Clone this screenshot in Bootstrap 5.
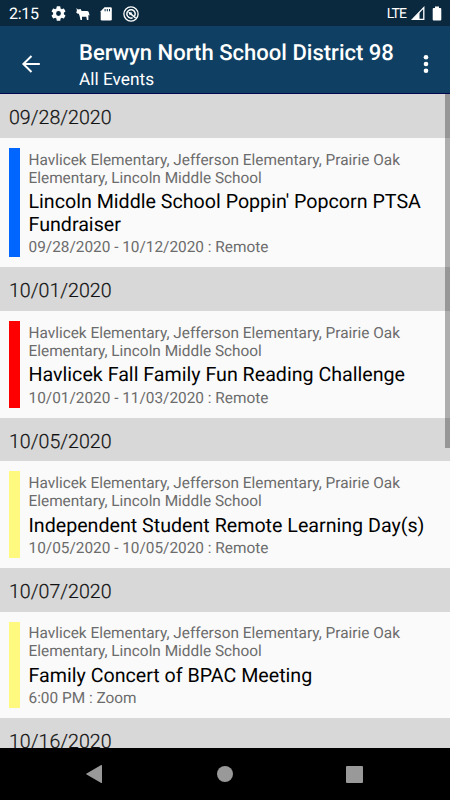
<!DOCTYPE html>
<html lang="en">
<head>
<meta charset="utf-8">
<meta name="viewport" content="width=device-width, initial-scale=1">
<title>All Events</title>
<link href="https://cdn.jsdelivr.net/npm/bootstrap@5.3.0/dist/css/bootstrap.min.css" rel="stylesheet">
<style>
body{font-family:Roboto,"Liberation Sans",sans-serif;background:#fafafa;color:#000;text-rendering:geometricPrecision}
.screen{height:800px}
.status{height:26px;background:#0a293e;font-size:16px;padding:1px 8px 0 9px}
.status svg,.appbar svg,.sysnav svg{display:block;flex:none}
.clock{letter-spacing:-.25px;width:42px;line-height:26px}
.lte{font-size:14px;letter-spacing:-.9px;line-height:24px;margin-right:5px}
.status .gap-icon{margin-left:10px}
.status .gap-battery{margin-left:7px}
.appbar{height:68px;background:#0f4064;border-bottom:1px solid #00074c;padding:0 17px 0 20px}
.appbar h1{font-size:22.05px;line-height:26px;font-weight:500;margin:7px 0 0}
.appbar .sub{font-size:17.3px;line-height:20px;margin-top:3px}
.appbar svg{margin-top:8px}
.titles{margin-left:37px}
.day{height:43.8px;background:#d8d8d8;color:#111;font-size:19.6px;line-height:47px;padding-left:9px;font-weight:300;-webkit-text-stroke:.2px #111}
.event{padding:10px 18px 10px 9px}
.stripe{width:10.5px;flex:none}
.details{padding:3.8px 0 0 9px}
.meta{font-size:15.38px;line-height:17.9px;color:#6c6c6c}
.name{font-size:19.65px;line-height:23px;margin:2.6px 0 3.4px;font-weight:400}
.thumb{width:5px;height:354px;right:0;top:0;background:rgba(0,0,0,.3)}
.sysnav{height:52px;background:#000;padding:0 87px 0 86px}
</style>
<script src="https://cdn.jsdelivr.net/npm/bootstrap@5.3.0/dist/js/bootstrap.bundle.min.js"></script>
</head>
<body>
<div class="screen d-flex flex-column overflow-hidden">
  <div class="status d-flex align-items-center text-white flex-shrink-0">
    <span class="clock">2:15</span>
    <svg width="15" height="15" viewBox="2 2 20 20" fill="#fff"><path d="M19.14 12.94c.04-.3.06-.61.06-.94s-.02-.64-.07-.94l2.03-1.58a.49.49 0 0 0 .12-.61l-1.92-3.32a.49.49 0 0 0-.59-.22l-2.39.96a7 7 0 0 0-1.62-.94l-.36-2.54a.48.48 0 0 0-.48-.41h-3.84a.48.48 0 0 0-.47.41l-.36 2.54c-.59.24-1.13.57-1.62.94l-2.39-.96a.48.48 0 0 0-.59.22L2.74 8.87a.48.48 0 0 0 .12.61l2.03 1.58a6 6 0 0 0 0 1.88l-2.03 1.58a.49.49 0 0 0-.12.61l1.92 3.32c.12.22.37.29.59.22l2.39-.96c.5.38 1.03.7 1.62.94l.36 2.54c.05.24.24.41.48.41h3.84c.24 0 .44-.17.47-.41l.36-2.54a7 7 0 0 0 1.62-.94l2.39.96c.22.08.47 0 .59-.22l1.92-3.32a.48.48 0 0 0-.12-.61zM12 15.2a3.2 3.2 0 1 1 0-6.4 3.2 3.2 0 0 1 0 6.4z"/></svg>
    <svg class="gap-icon" width="14" height="14" viewBox="0 0 14 14" fill="#fff"><path d="M.4 1.1 2 2.5 4.6 2 5.6 3.9H11.3Q13 4.2 13.1 6.4L13.6 8.4 12.4 8.1V13H10.9L10.3 9.8H6V13H4.5L3.6 8.9 2.8 6.8 1.2 6.6.3 5.4.9 3.4Z"/></svg>
    <svg class="gap-icon" width="13" height="16" viewBox="0 0 13 16"><path fill="#fff" d="M4.5 1.2h6q1.3 0 1.3 1.3v10.8q0 1.3-1.3 1.3H2q-1.3 0-1.3-1.3V5.2Z"/><path stroke="#0a293e" stroke-width="1" d="M5.1 3v2.3M7.3 3v2.3M9.5 3v2.3"/></svg>
    <svg class="gap-icon" width="16" height="16" viewBox="0 0 16 16" fill="none" stroke="#fff"><circle cx="8" cy="8" r="7.1" stroke-width="1.3"/><path stroke-width="1.5" d="M11.6 10.1A4.2 4.2 0 1 0 9.6 11.8"/><path stroke-width="1.6" d="m7.2 7.4 5.4 4.6"/><path fill="#fff" stroke="none" d="m5.2 5.8 4.2.9-2.5 2.7z"/></svg>
    <span class="lte ms-auto">LTE</span>
    <svg width="14" height="15" viewBox="0 0 14 15"><path fill="none" stroke="#fff" stroke-width="1.3" d="M12.8 1.6v11.8H1.4Z"/><path fill="#fff" d="M1 13.8 8.5 6v7.8Z"/></svg>
    <svg class="gap-battery" width="10" height="15" viewBox="0 0 10 15" fill="#fff"><path d="M3 .5h4V2h1.3q1 0 1 1v10.5q0 1-1 1H1.7q-1 0-1-1V3q0-1 1-1H3Z"/></svg>
  </div>
  <header class="appbar d-flex text-white flex-shrink-0">
    <svg class="align-self-center" width="22" height="20" viewBox="0 0 22 20" fill="none" stroke="#fff" stroke-width="2"><path d="M19.8 10H3.5M11.5 2 3.4 10l8.1 8"/></svg>
    <div class="titles flex-grow-1 pt-2 text-nowrap">
      <h1 id="school">Berwyn North School District 98</h1>
      <div class="sub" id="view">All Events</div>
    </div>
    <svg class="align-self-center" width="14" height="20" viewBox="0 0 14 20" fill="#fff"><circle cx="7" cy="3.3" r="2.3"/><circle cx="7" cy="10" r="2.3"/><circle cx="7" cy="16.7" r="2.3"/></svg>
  </header>
  <main class="flex-grow-1 overflow-hidden position-relative">
    <div class="day">09/28/2020</div>
    <div class="event d-flex">
      <div class="stripe" style="background:#0066ff"></div>
      <div class="details">
        <div class="meta">Havlicek Elementary, Jefferson Elementary, Prairie Oak<br>Elementary, Lincoln Middle School</div>
        <h2 class="name">Lincoln Middle School Poppin' Popcorn PTSA<br>Fundraiser</h2>
        <div class="meta">09/28/2020 - 10/12/2020 : Remote</div>
      </div>
    </div>
    <div class="day">10/01/2020</div>
    <div class="event d-flex">
      <div class="stripe" style="background:#ff0000"></div>
      <div class="details">
        <div class="meta">Havlicek Elementary, Jefferson Elementary, Prairie Oak<br>Elementary, Lincoln Middle School</div>
        <h2 class="name">Havlicek Fall Family Fun Reading Challenge</h2>
        <div class="meta">10/01/2020 - 11/03/2020 : Remote</div>
      </div>
    </div>
    <div class="day">10/05/2020</div>
    <div class="event d-flex">
      <div class="stripe" style="background:#fff97f"></div>
      <div class="details">
        <div class="meta">Havlicek Elementary, Jefferson Elementary, Prairie Oak<br>Elementary, Lincoln Middle School</div>
        <h2 class="name">Independent Student Remote Learning Day(s)</h2>
        <div class="meta">10/05/2020 - 10/05/2020 : Remote</div>
      </div>
    </div>
    <div class="day">10/07/2020</div>
    <div class="event d-flex">
      <div class="stripe" style="background:#fff97f"></div>
      <div class="details">
        <div class="meta">Havlicek Elementary, Jefferson Elementary, Prairie Oak<br>Elementary, Lincoln Middle School</div>
        <h2 class="name">Family Concert of BPAC Meeting</h2>
        <div class="meta">6:00 PM : Zoom</div>
      </div>
    </div>
    <div class="day">10/16/2020</div>
    <div class="thumb position-absolute"></div>
  </main>
  <nav class="sysnav d-flex align-items-center justify-content-between flex-shrink-0">
    <svg width="17" height="20" viewBox="0 0 17 20" fill="#999"><path d="M15.2 1q.8-.4.8.5v17q0 .9-.8.5L.6 10.6q-.8-.6 0-1.2Z"/></svg>
    <svg width="18" height="18" viewBox="0 0 18 18" fill="#999"><circle cx="9" cy="9" r="8"/></svg>
    <svg width="17" height="17" viewBox="0 0 17 17" fill="#999"><rect width="17" height="17" rx="1"/></svg>
  </nav>
</div>
</body>
</html>
